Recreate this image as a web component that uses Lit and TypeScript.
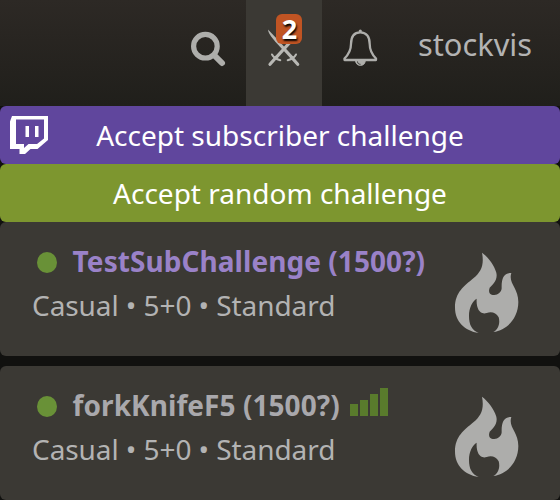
import { LitElement, html, svg, css, nothing } from "lit";
import { customElement, property } from "lit/decorators.js";

const flame = svg`<path d="M126 38C144 52 162 74 169 98C174 120 158 133 149 143C143 160 153 166 163 165C174 165 184 157 185 145C184 117 190 99 214 99C204 130 235 143 235 186C235 235 200 271 160 276C175 268 181 250 176 232C168 218 155 214 140 219C120 225 108 207 110 176C98 183 87 202 87 228C87 255 96 271 116 279C74 272 45 244 45 203C45 157 72 139 100 115C124 95 133 74 126 38Z"/>`;

@customElement("challenge-card")
export class ChallengeCard extends LitElement {
  @property() name = "";
  @property({ type: Boolean }) subscriber = false;
  @property({ type: Boolean }) signal = false;

  static styles = css`
    :host { display: flex; height: 134px; box-sizing: border-box; background: #3b3934; border-radius: 6px; padding: 19px 40px 0 32px; justify-content: space-between; color: #b3b3b3; }
    .info { width: 393px; }
    .user { display: flex; align-items: center; height: 40px; white-space: nowrap; overflow: hidden; font-weight: 700; font-size: 28px; letter-spacing: 0.06px; color: #a9a8ac; }
    .sub { color: #9a82c8; }
    .dot { width: 20px; height: 21px; border-radius: 50%; background: #699137; margin: 2px 15.6px 0 5px; flex: none; }
    .bars { display: flex; align-items: flex-end; gap: 2px; height: 28px; margin: -6px 0 0 10px; }
    .bars i { width: 8px; background: #597b2c; }
    .b1 { height: 12px; } .b2 { height: 16px; } .b3 { height: 22px; } .b4 { height: 28px; }
    .mode { height: 48px; line-height: 48px; font-size: 28px; letter-spacing: -0.07px; white-space: nowrap; }
    .flame { width: 66px; height: 82px; margin-top: 11px; fill: #adadab; flex: none; }
  `;

  render() {
    return html`
      <div class="info">
        <div class="user ${this.subscriber ? "sub" : ""}">
          <span class="dot"></span><span>${this.name}</span>
          ${this.signal ? html`<span class="bars"><i class="b1"></i><i class="b2"></i><i class="b3"></i><i class="b4"></i></span>` : nothing}
        </div>
        <div class="mode">Casual • 5+0 • Standard</div>
      </div>
      <svg class="flame" viewBox="42 36 198 246">${flame}</svg>
    `;
  }
}

@customElement("app-root")
export class AppRoot extends LitElement {
  static styles = css`
    :host { display: block; width: 560px; height: 500px; overflow: hidden; background: #11110f; font-family: "Noto Sans", sans-serif; font-size: 28px; color: #b3b3b3; }
    header { display: flex; justify-content: flex-end; height: 106px; background: linear-gradient(#2d2925, #201f1b); }
    .tool { position: relative; width: 76px; height: 106px; }
    .active { background: #3b3934; }
    .tool svg { display: block; width: 76px; height: 106px; }
    .badge { position: absolute; left: 30px; top: 14px; width: 26px; height: 30px; border-radius: 6px; background: #c05423; color: #fff; font-weight: 700; font-size: 27px; line-height: 30px; text-indent: 1px; text-align: center; text-shadow: 1px 2px 2px #000; }
    .account { width: 114px; margin: 0 28px 0 20px; line-height: 88px; font-size: 30.8px; white-space: nowrap; }
    .list { background: #11110f; }
    .accept { position: relative; display: flex; align-items: center; justify-content: center; height: 58px; border-radius: 6px; color: #fff; background: #7d962f; }
    .twitch { background: #60469d; }
    .twitch svg { position: absolute; left: 10px; top: 10px; width: 38px; height: 38px; }
    .cards { display: grid; gap: 10px; }
  `;

  render() {
    return html`
      <header>
        <div class="tool">
          <svg viewBox="0 0 76 106" fill="none" stroke="#aeaeab" stroke-linecap="round">
            <circle cx="35.4" cy="46.2" r="11.8" stroke-width="5.2"/>
            <path d="M45 56L52 63" stroke-width="6"/>
          </svg>
        </div>
        <div class="tool active">
          <svg viewBox="0 0 76 106" fill="#b8b8b4">
            <path d="M22 29.5L32.5 40.5L48.5 58L46 60L31 43.500C26.500 38.500 22.500 34 22 29.500Z"/>
            <path d="M54 29.5L43.5 40.5L27.500 58L30 60L45 43.500C49.500 38.500 53.500 34 54 29.500Z"/>
            <g fill="none" stroke="#b8b8b4" stroke-linecap="round">
              <path d="M24 64.200L30 57.500M51.700 64.200L45.700 57.500" stroke-width="3.200"/>
              <path d="M26 54.500C27.500 57.500 30 59 34.300 60.300M50 54.500C48.500 57.500 46 59 41.700 60.300" stroke-width="2"/>
            </g>
          </svg>
          <span class="badge">2</span>
        </div>
        <div class="tool">
          <svg viewBox="0 0 76 106" fill="none" stroke="#aeaeab" stroke-width="2.300" stroke-linejoin="round">
            <path d="M38.3 32.3C32 32.3 29 37 29 44C29 51 26.500 54.500 22.500 58.500V60H54V58.500C50 54.500 47.700 51 47.700 44C47.700 37 44.500 32.300 38.300 32.300Z"/>
            <circle cx="38.3" cy="31" r="1.600" fill="#aeaeab" stroke="none"/>
            <path d="M33.500 61C34 67 43 67 43.300 61Z" fill="#aeaeab" stroke-width="0.8"/>
            <path d="M35.500 61.500C35.500 63.500 37 64.300 38.500 64.300" stroke="#33322f" stroke-width="1"/>
          </svg>
        </div>
        <div class="account">stockvis</div>
      </header>
      <div class="list">
        <div class="accept twitch">
          <svg viewBox="0 0 38 38" fill="#fff" fill-rule="evenodd"><path d="M2 0H38V24L27.500 33H20.500L15 38H9.500V33H0V5.500ZM6 3.500V28H14V32L18.500 28H27L34 22.500V3.500ZM15.500 10H19V21H15.500ZM25 10H28.500V21H25Z"/></svg>
          <span>Accept subscriber challenge</span>
        </div>
        <div class="accept"><span>Accept random challenge</span></div>
        <div class="cards">
          <challenge-card name="TestSubChallenge (1500?)" subscriber></challenge-card>
          <challenge-card name="forkKnifeF5 (1500?)" signal></challenge-card>
        </div>
      </div>
    `;
  }
}
